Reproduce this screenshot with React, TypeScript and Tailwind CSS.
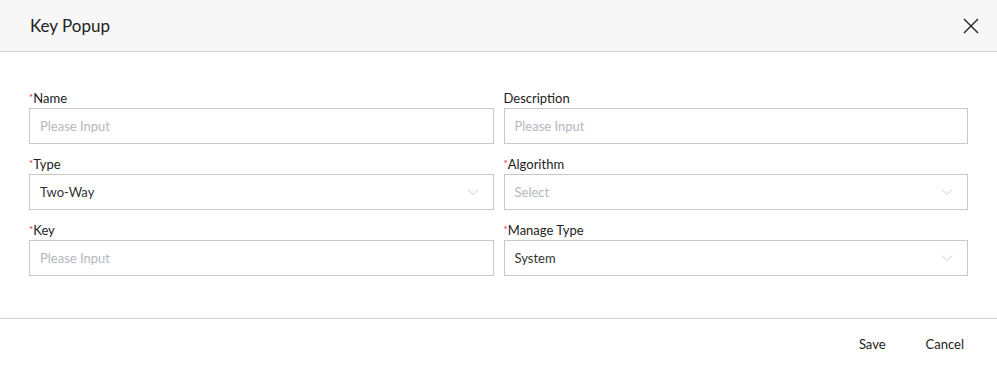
import React from 'react';

const Chevron = () => (
    <svg width="12" height="7" viewBox="0 0 12 7" fill="none" className="absolute right-[14px] top-1/2 -translate-y-1/2">
        <path d="M1 1l5 5 5-5" stroke="#c4c7cc" strokeWidth="1" />
    </svg>
);

const Label: React.FC<{ text: string; required?: boolean }> = ({ text, required }) => (
    <div className="h-[20px] flex items-center text-[13px] text-[#222] leading-none">
        {required && <span className="text-[#e3262b] text-[10px] self-start mt-[4px]">*</span>}
        {text}
    </div>
);

const Field: React.FC<{ label: string; required?: boolean; value?: string; placeholder?: string; select?: boolean }> = ({ label, required, value, placeholder, select }) => (
    <div className="flex flex-col">
        <Label text={label} required={required} />
        <div className="relative h-[36px] border border-[#c8c8c8] flex items-center px-[10px] pt-[2px] text-[13px]">
            {value ? <span className="text-[#333]">{value}</span> : <span className="text-[#b4b8be]">{placeholder}</span>}
            {select && <Chevron />}
        </div>
    </div>
);

export default function App() {
    return (
        <div className="w-[997px] h-[367px] bg-white flex flex-col" style={{ fontFamily: 'Lato, "Noto Sans", sans-serif' }}>
            <header className="h-[52px] bg-[#f7f7f7] border-b border-[#cfcfcf] flex items-center justify-between pl-[30px] pr-[17px]">
                <h1 className="text-[17px] text-[#222] font-normal pt-[1px]">Key Popup</h1>
                <svg width="18" height="18" viewBox="0 0 18 18" fill="none">
                    <path d="M2 2l14 14M16 2L2 16" stroke="#222" strokeWidth="1.4" />
                </svg>
            </header>
            <div className="h-[267px] border-b border-[#cfcfcf] pt-[36px] px-[29px]">
                <div className="grid grid-cols-2 gap-x-[10px] gap-y-[10px]">
                    <Field label="Name" required placeholder="Please Input" />
                    <Field label="Description" placeholder="Please Input" />
                    <Field label="Type" required value="Two-Way" select />
                    <Field label="Algorithm" required placeholder="Select" select />
                    <Field label="Key" required placeholder="Please Input" />
                    <Field label="Manage Type" required value="System" select />
                </div>
            </div>
            <footer className="flex-1 flex items-center justify-end pr-[33px] pt-[4px] gap-[40px] text-[13px] text-[#222]">
                <button>Save</button>
                <button>Cancel</button>
            </footer>
        </div>
    );
}
